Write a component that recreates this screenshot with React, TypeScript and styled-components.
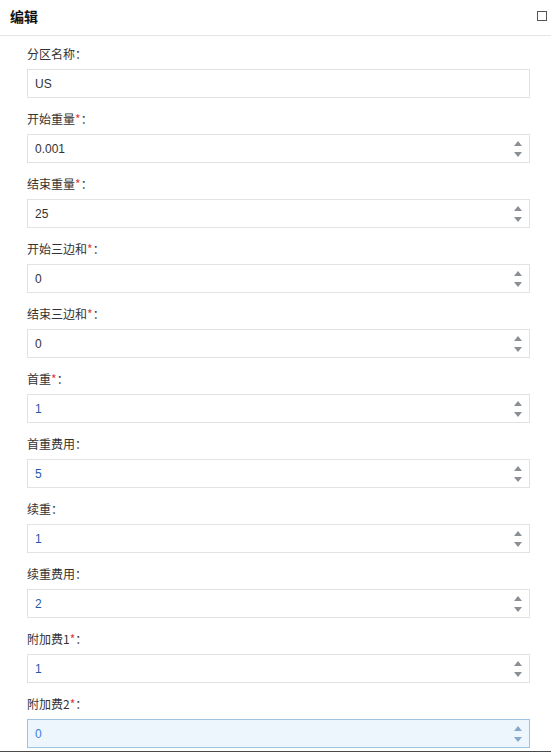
import styled, { createGlobalStyle } from 'styled-components';

const GlobalStyle = createGlobalStyle`
  html, body {
    margin: 0;
    padding: 0;
    background: #fff;
  }
  * {
    box-sizing: border-box;
  }
`;

const Dialog = styled.div`
  width: 551px;
  height: 752px;
  overflow: hidden;
  background: #fff;
  border-bottom: 1px solid #4a4a4a;
  font-family: 'Noto Sans CJK SC', 'Liberation Sans', sans-serif;
`;

const Header = styled.div`
  height: 36px;
  display: flex;
  align-items: center;
  justify-content: space-between;
  padding: 0 4px 0 10px;
  border-bottom: 1px solid #e5e5e5;
  > h2 {
    margin: 0;
    font-size: 14px;
    font-weight: bold;
    color: #111;
    line-height: 1;
    margin-top: -3px;
  }
`;

const MaxButton = styled.button`
  width: 10px;
  height: 10px;
  padding: 0;
  margin: -3px 0 0 0;
  border: 1px solid #555;
  background: #fff;
  cursor: pointer;
`;

const Body = styled.div`
  padding: 10px 21px 0 27px;
`;

const Field = styled.div`
  display: flex;
  flex-direction: column;
  margin-bottom: 13px;
`;

const Label = styled.label`
  height: 15px;
  margin-bottom: 8px;
  font-size: 12px;
  line-height: 15px;
  color: #333;
  > em {
    font-style: normal;
    color: #e4393c;
  }
`;

const InputBox = styled.div<{ $focused?: boolean }>`
  height: 29px;
  display: flex;
  align-items: center;
  border: 1px solid ${p => (p.$focused ? '#9ec2e2' : '#e2e2e2')};
  background: ${p => (p.$focused ? '#eef6fd' : '#fff')};
  padding: 0 7px 0 7px;
`;

const TextInput = styled.input<{ $blue?: boolean; $focused?: boolean }>`
  flex: 1;
  min-width: 0;
  border: none;
  outline: none;
  background: transparent;
  padding: 0;
  font-family: 'Liberation Sans', 'Noto Sans CJK SC', sans-serif;
  font-size: 12px;
  color: ${p => (p.$focused ? '#3b7fe0' : p.$blue ? '#1f5aa8' : '#333')};
`;

const Spinner = styled.div<{ $focused?: boolean }>`
  display: flex;
  flex-direction: column;
  align-items: center;
  gap: 6px;
  margin-right: 0;
  > span {
    width: 0;
    height: 0;
    border-left: 4px solid transparent;
    border-right: 4px solid transparent;
  }
  > .up {
    border-bottom: 5px solid ${p => (p.$focused ? '#86a9c8' : '#8a8f96')};
  }
  > .down {
    border-top: 5px solid ${p => (p.$focused ? '#86a9c8' : '#8a8f96')};
  }
`;

interface FieldData {
  label: string;
  required?: boolean;
  value: string;
  number?: boolean;
  blue?: boolean;
  focused?: boolean;
}

const fields: FieldData[] = [
  { label: '分区名称', value: 'US' },
  { label: '开始重量', required: true, value: '0.001', number: true },
  { label: '结束重量', required: true, value: '25', number: true },
  { label: '开始三边和', required: true, value: '0', number: true },
  { label: '结束三边和', required: true, value: '0', number: true },
  { label: '首重', required: true, value: '1', number: true, blue: true },
  { label: '首重费用', value: '5', number: true, blue: true },
  { label: '续重', value: '1', number: true, blue: true },
  { label: '续重费用', value: '2', number: true, blue: true },
  { label: '附加费1', required: true, value: '1', number: true, blue: true },
  { label: '附加费2', required: true, value: '0', number: true, blue: true, focused: true },
];

const App = () => {
  return (
    <Dialog>
      <GlobalStyle />
      <Header>
        <h2>编辑</h2>
        <MaxButton type="button" aria-label="最大化" />
      </Header>
      <Body>
        {fields.map((f, i) => (
          <Field key={i}>
            <Label>
              {f.label}
              {f.required && <em>*</em>}：
            </Label>
            <InputBox $focused={f.focused}>
              <TextInput readOnly value={f.value} $blue={f.blue} $focused={f.focused} />
              {f.number && (
                <Spinner $focused={f.focused}>
                  <span className="up" />
                  <span className="down" />
                </Spinner>
              )}
            </InputBox>
          </Field>
        ))}
      </Body>
    </Dialog>
  );
};

export default App;
